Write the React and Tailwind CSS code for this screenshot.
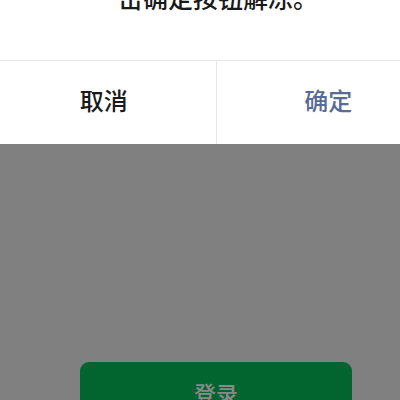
export default function App() {
  const font = { fontFamily: '"Noto Sans CJK SC", "Noto Sans", sans-serif' };
  return (
    <div className="w-[400px] h-[400px] overflow-hidden bg-[#808080]" style={font}>
      <div className="w-[448px] -ml-[8px] flex flex-col">
        <div className="bg-white flex flex-col">
          <div className="h-[60px] overflow-hidden flex flex-col items-center">
            <p className="-mt-[15px] text-[25px] leading-[25px] font-medium text-[#1a1a1a] pl-[4px]">击确定按钮解冻。</p>
          </div>
          <div className="h-px bg-[#e6e6e6]" />
          <div className="flex h-[83px]">
            <button className="flex-1 flex items-center justify-center text-[24px] font-medium text-[#1a1a1a] border-r border-[#e6e6e6] pb-[5px]">取消</button>
            <button className="flex-1 flex items-center justify-center text-[24px] font-medium text-[#576b95] pb-[5px]">确定</button>
          </div>
        </div>
        <div className="ml-[88px] mt-[218px] w-[272px] h-[64px] rounded-[9px] bg-[#02652f] flex justify-center pt-[17px]">
          <span className="text-[22px] leading-[26px] font-medium text-[#8a8a8a]">登录</span>
        </div>
      </div>
    </div>
  );
}
